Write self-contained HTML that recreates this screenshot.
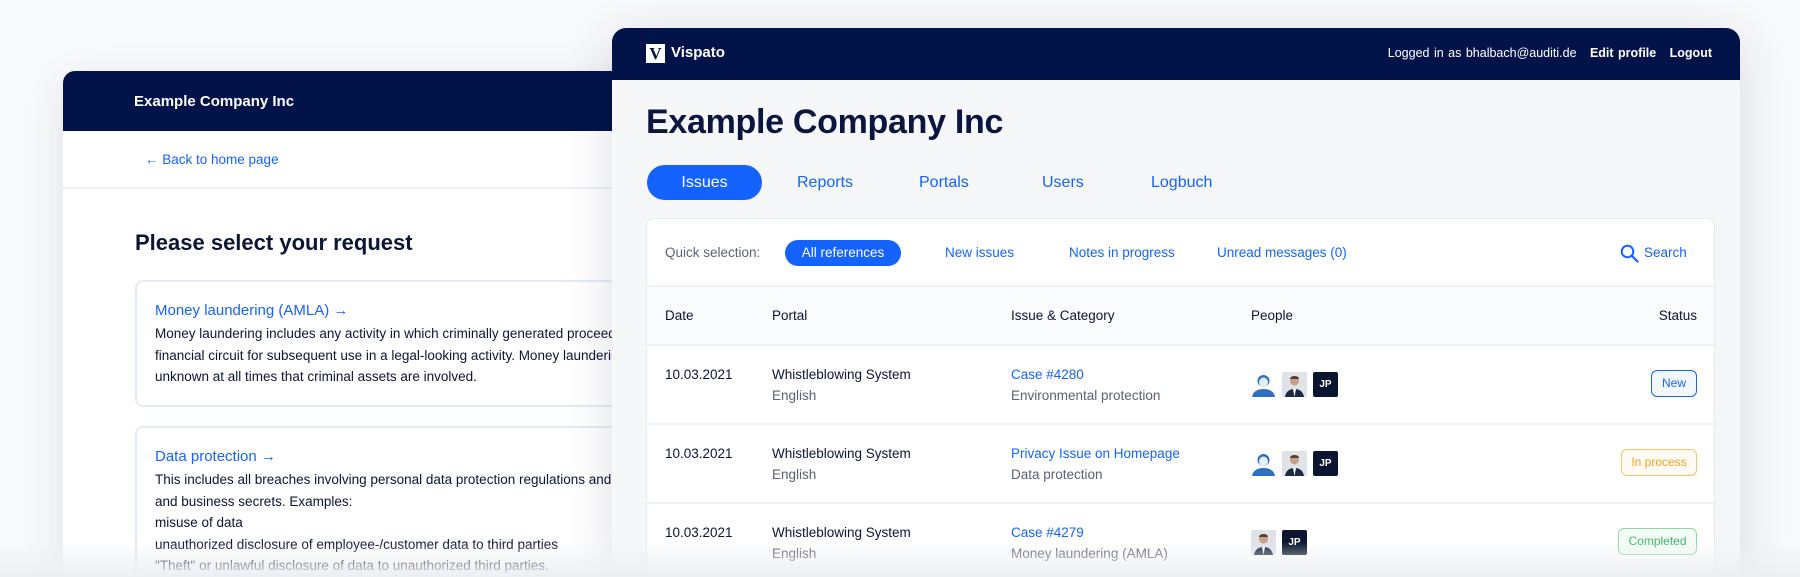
<!DOCTYPE html>
<html style="width:1800px;height:577px;overflow:hidden"><head><meta charset="utf-8"><style>
*{box-sizing:border-box;margin:0;padding:0}
body{width:1800px;height:577px;overflow:hidden;background:#f8f9fb;font-family:"Liberation Sans",Arial,sans-serif;position:relative;color:#0c1533}
.abs{position:absolute}
.back{left:63px;top:71px;width:700px;height:506px;background:#fff;border-radius:12px 0 0 0;box-shadow:0 10px 40px rgba(20,30,60,.10);overflow:hidden}
.back .hd{height:60px;background:#02134a;color:#fff;font-weight:bold;font-size:15px;padding:22px 0 0 71px}
.blue{color:#1463ff}
.box{position:absolute;left:72px;width:620px;border:2px solid #e5ebf3;border-radius:8px;background:#fff;overflow:hidden}
.box .t{font-size:15px;color:#1463ff;margin:0 0 4px 18px}
.box p{font-size:13.5px;line-height:21.5px;margin-left:18px;white-space:nowrap}
.front{left:612px;top:28px;width:1128px;height:549px;background:#f6f7f9;border-radius:14px 14px 0 0;box-shadow:0 10px 50px rgba(20,30,60,.14);overflow:hidden}
.front .hd{height:52px;background:#02134a;color:#fff;position:relative}
.tab{position:absolute;top:137px;height:35px;font-size:16px;color:#1463ff;line-height:35px}
.card{position:absolute;left:34px;top:190px;width:1069px;height:359px;background:#fff;border:1px solid #e6ebf2;border-bottom:none;border-radius:8px 8px 0 0;overflow:hidden}
.q{position:absolute;top:21px;font-size:13.5px;color:#1463ff;line-height:26px}
.row{position:absolute;left:0;width:100%;border-top:2px solid #eef1f5}
.c{position:absolute;font-size:13.5px;line-height:21px}
.g{color:#5b6275}
.av{position:absolute;width:25px;height:25px;border-radius:2px}
.jp{background:#0a1630;color:#fff;font-size:10px;font-weight:bold;text-align:center;line-height:25px}
.st{position:absolute;right:17px;height:27px;border-radius:6px;font-size:12px;line-height:24px;text-align:center;border:1.5px solid}
</style></head><body>

<div class="abs back">
  <div class="hd">Example Company Inc</div>
  <div class="abs blue" style="left:82px;top:81px;font-size:13.5px">← Back to home page</div>
  <div class="abs" style="left:0;top:116px;width:100%;border-top:2px solid #edf0f4"></div>
  <div class="abs" style="left:72px;top:159px;font-size:22px;font-weight:bold">Please select your request</div>
  <div class="box" style="top:209px;height:127px;padding-top:20px">
    <div class="t">Money laundering (AMLA) →</div>
    <p>Money laundering includes any activity in which criminally generated proceeds are introduced into the legal</p>
    <p>financial circuit for subsequent use in a legal-looking activity. Money laundering is when it remains</p>
    <p>unknown at all times that criminal assets are involved.</p>
  </div>
  <div class="box" style="top:355px;height:151px;padding-top:20px;border-bottom:none;border-radius:8px 8px 0 0">
    <div class="t">Data protection →</div>
    <p>This includes all breaches involving personal data protection regulations and company</p>
    <p>and business secrets. Examples:</p>
    <p>misuse of data</p>
    <p>unauthorized disclosure of employee-/customer data to third parties</p>
    <p>"Theft" or unlawful disclosure of data to unauthorized third parties.</p>
  </div>
</div>

<div class="abs front">
  <div class="hd">
    <div class="abs" style="left:34px;top:16px;width:19px;height:19px;background:#fff;color:#02134a;font-family:'Liberation Serif',serif;font-weight:bold;font-size:17px;text-align:center;line-height:19px">V</div>
    <div class="abs" style="left:59px;top:16px;font-size:15px;font-weight:bold">Vispato</div>
    <div class="abs" style="right:28px;top:18px;font-size:12.5px;font-weight:bold;word-spacing:1px">
      <span style="font-weight:normal">Logged in as bhalbach@auditi.de</span>&nbsp;&nbsp; Edit profile &nbsp;&nbsp;Logout</div>
  </div>
  <div class="abs" style="left:34px;top:75px;font-size:34px;font-weight:bold;color:#0a1540;letter-spacing:-0.3px">Example Company Inc</div>
  <div class="tab" style="left:35px;width:115px;background:#1463ff;color:#fff;border-radius:18px;text-align:center">Issues</div>
  <div class="tab" style="left:185px">Reports</div>
  <div class="tab" style="left:307px">Portals</div>
  <div class="tab" style="left:430px">Users</div>
  <div class="tab" style="left:539px">Logbuch</div>

  <div class="card">
    <div class="q" style="left:18px;color:#5b6275">Quick selection:</div>
    <div class="q" style="left:138px;width:116px;background:#1463ff;color:#fff;border-radius:13px;text-align:center">All references</div>
    <div class="q" style="left:298px">New issues</div>
    <div class="q" style="left:422px">Notes in progress</div>
    <div class="q" style="left:570px">Unread messages (0)</div>
    <svg class="abs" style="left:973px;top:25px" width="19" height="19" viewBox="0 0 19 19"><circle cx="7.5" cy="7.5" r="5.8" fill="none" stroke="#1463ff" stroke-width="2"/><path d="M12 12l5.5 5.5" stroke="#1463ff" stroke-width="2.2" stroke-linecap="round"/></svg>
    <div class="q" style="left:997px">Search</div>

    <div class="row" style="top:66px;height:59px;background:#fafbfc">
      <div class="c" style="left:18px;top:18px">Date</div>
      <div class="c" style="left:125px;top:18px">Portal</div>
      <div class="c" style="left:364px;top:18px">Issue &amp; Category</div>
      <div class="c" style="left:604px;top:18px">People</div>
      <div class="c" style="right:17px;top:18px">Status</div>
    </div>

    <div class="row" style="top:125px;height:79px">
      <div class="c" style="left:18px;top:18px">10.03.2021</div>
      <div class="c" style="left:125px;top:18px">Whistleblowing System<br><span class="g">English</span></div>
      <div class="c" style="left:364px;top:18px"><span class="blue">Case #4280</span><br><span class="g">Environmental protection</span></div>
      <svg class="av" style="left:604px;top:26px" viewBox="0 0 25 25"><circle cx="12.5" cy="9" r="6" fill="#2e6fc0"/><ellipse cx="12.5" cy="10.5" rx="4.5" ry="5" fill="#e3eefa"/><path d="M1 25c1-6 6-8 11.5-8s10.5 2 11.5 8z" fill="#2e6fc0"/></svg>
      <svg class="av" style="left:635px;top:26px" viewBox="0 0 25 25"><rect width="25" height="25" fill="#dfe3e8"/><circle cx="12.5" cy="9" r="4.5" fill="#caa08a"/><path d="M8 7c0-4 9-4 9 0z" fill="#5a4030"/><path d="M3 25c1-6 5-8 9.5-8s8.5 2 9.5 8z" fill="#1d2a44"/><path d="M11 17h3l-1.5 8z" fill="#fff"/></svg>
      <div class="av jp" style="left:666px;top:26px">JP</div>
      <div class="st" style="top:24px;width:46px;color:#1463ff;border-color:#1463ff;background:#f3f7ff">New</div>
    </div>
    <div class="row" style="top:204px;height:79px">
      <div class="c" style="left:18px;top:18px">10.03.2021</div>
      <div class="c" style="left:125px;top:18px">Whistleblowing System<br><span class="g">English</span></div>
      <div class="c" style="left:364px;top:18px"><span class="blue">Privacy Issue on Homepage</span><br><span class="g">Data protection</span></div>
      <svg class="av" style="left:604px;top:26px" viewBox="0 0 25 25"><circle cx="12.5" cy="9" r="6" fill="#2e6fc0"/><ellipse cx="12.5" cy="10.5" rx="4.5" ry="5" fill="#e3eefa"/><path d="M1 25c1-6 6-8 11.5-8s10.5 2 11.5 8z" fill="#2e6fc0"/></svg>
      <svg class="av" style="left:635px;top:26px" viewBox="0 0 25 25"><rect width="25" height="25" fill="#dfe3e8"/><circle cx="12.5" cy="9" r="4.5" fill="#caa08a"/><path d="M8 7c0-4 9-4 9 0z" fill="#5a4030"/><path d="M3 25c1-6 5-8 9.5-8s8.5 2 9.5 8z" fill="#1d2a44"/><path d="M11 17h3l-1.5 8z" fill="#fff"/></svg>
      <div class="av jp" style="left:666px;top:26px">JP</div>
      <div class="st" style="top:24px;width:76px;color:#f0a020;border-color:#f5c46a;background:#fffbf3">In process</div>
    </div>
    <div class="row" style="top:283px;height:76px">
      <div class="c" style="left:18px;top:18px">10.03.2021</div>
      <div class="c" style="left:125px;top:18px">Whistleblowing System<br><span class="g">English</span></div>
      <div class="c" style="left:364px;top:18px"><span class="blue">Case #4279</span><br><span class="g">Money laundering (AMLA)</span></div>
      <svg class="av" style="left:604px;top:26px" viewBox="0 0 25 25"><rect width="25" height="25" fill="#dfe3e8"/><circle cx="12.5" cy="9" r="4.5" fill="#caa08a"/><path d="M8 7c0-4 9-4 9 0z" fill="#5a4030"/><path d="M3 25c1-6 5-8 9.5-8s8.5 2 9.5 8z" fill="#1d2a44"/><path d="M11 17h3l-1.5 8z" fill="#fff"/></svg>
      <div class="av jp" style="left:635px;top:26px">JP</div>
      <div class="st" style="top:24px;width:79px;color:#3cb86a;border-color:#8fd9a8;background:#f4fcf6">Completed</div>
    </div>
  </div>
</div>
<div class="abs" style="left:0;top:542px;width:1800px;height:35px;background:linear-gradient(rgba(236,238,242,0),rgba(236,238,242,.97))"></div>
</body></html>
